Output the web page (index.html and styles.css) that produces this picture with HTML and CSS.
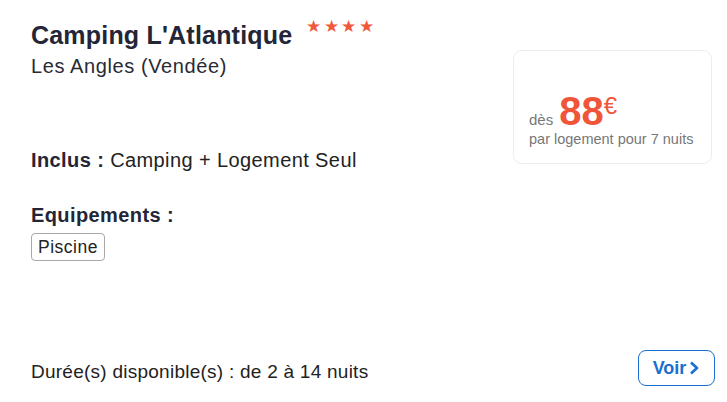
FILE: index.html
```html
<!DOCTYPE html>
<html lang="fr">
<head>
<meta charset="utf-8">
<link rel="stylesheet" href="styles.css">
</head>
<body>
<div class="card">
  <div class="top">
    <div class="info">
      <div class="title-row">
        <h1 class="title">Camping L'Atlantique</h1>
        <span class="stars">★★★★</span>
      </div>
      <div class="location">Les Angles (Vendée)</div>
      <div class="inclus"><b>Inclus :</b> Camping + Logement Seul</div>
      <div class="equip-title">Equipements :</div>
      <div class="tags"><span class="tag">Piscine</span></div>
    </div>
    <div class="price-box">
      <div class="price-line"><span class="des">dès</span> <span class="amount">88</span><span class="euro">€</span></div>
      <div class="per">par logement pour 7 nuits</div>
    </div>
  </div>
  <div class="bottom">
    <div class="duree">Durée(s) disponible(s) : de 2 à 14 nuits</div>
    <a class="voir" href="#">Voir<svg width="12" height="14" viewBox="0 0 12 14"><path d="M3 1.5 L9 7 L3 12.5" fill="none" stroke="currentColor" stroke-width="2.6" stroke-linejoin="round"/></svg></a>
  </div>
</div>
</body>
</html>
```
FILE: styles.css
```css
html, body {
  margin: 0;
  padding: 0;
  background: #fff;
}
body {
  font-family: "Liberation Sans", Arial, sans-serif;
  color: #222;
}
.card {
  width: 727px;
  height: 402px;
  box-sizing: border-box;
  padding: 17px 12px 0 31px;
  display: flex;
  flex-direction: column;
}
.top {
  display: flex;
  justify-content: space-between;
  align-items: flex-start;
}
.title-row {
  display: flex;
  align-items: flex-start;
  gap: 14px;
}
.title {
  margin: 0;
  font-size: 25px;
  letter-spacing: 0.2px;
  font-weight: bold;
  color: #242536;
  line-height: 37px;
}
.stars {
  color: #f0593b;
  font-size: 17px;
  letter-spacing: 2.5px;
  line-height: 18px;
  margin-top: 1px;
}
.location {
  font-size: 20px;
  letter-spacing: 0.6px;
  line-height: 24px;
  color: #2a2a33;
}
.inclus {
  margin-top: 70px;
  font-size: 20px;
  letter-spacing: 0.4px;
  line-height: 24px;
  color: #222;
}
.inclus b {
  color: #242536;
}
.equip-title {
  margin-top: 31px;
  font-size: 20px;
  letter-spacing: 0.4px;
  font-weight: bold;
  line-height: 24px;
  color: #242536;
}
.tags {
  margin-top: 6px;
  display: flex;
}
.tag {
  border: 1px solid #a9a9a9;
  border-radius: 4px;
  padding: 3px 6px;
  font-size: 17.5px;
  letter-spacing: 0.5px;
  line-height: 20px;
  color: #222;
}
.price-box {
  margin-top: 33px;
  margin-right: 3px;
  width: 199px;
  height: 114px;
  box-sizing: border-box;
  border: 1px solid #ececf0;
  border-radius: 9px;
  padding: 41px 0 0 15px;
}
.price-line {
  display: flex;
  align-items: baseline;
  line-height: 38px;
}
.des {
  font-size: 15px;
  color: #777;
  margin-right: 6px;
}
.amount {
  font-size: 40px;
  font-weight: bold;
  color: #f0553a;
}
.euro {
  font-size: 24px;
  color: #f0553a;
  align-self: flex-start;
  line-height: 28px;
}
.per {
  margin-top: -9px;
  font-size: 14.5px;
  color: #777;
  line-height: 18px;
}
.bottom {
  margin-top: auto;
  margin-bottom: 16px;
  display: flex;
  justify-content: space-between;
  align-items: center;
}
.duree {
  margin-top: 8px;
  font-size: 19px;
  letter-spacing: 0.25px;
  color: #222;
}
.voir {
  display: flex;
  align-items: center;
  gap: 2px;
  width: 77px;
  height: 36px;
  box-sizing: border-box;
  justify-content: center;
  border: 1px solid #1a6fd0;
  border-radius: 8px;
  color: #1a6fd0;
  font-weight: bold;
  font-size: 18px;
  text-decoration: none;
}
```
